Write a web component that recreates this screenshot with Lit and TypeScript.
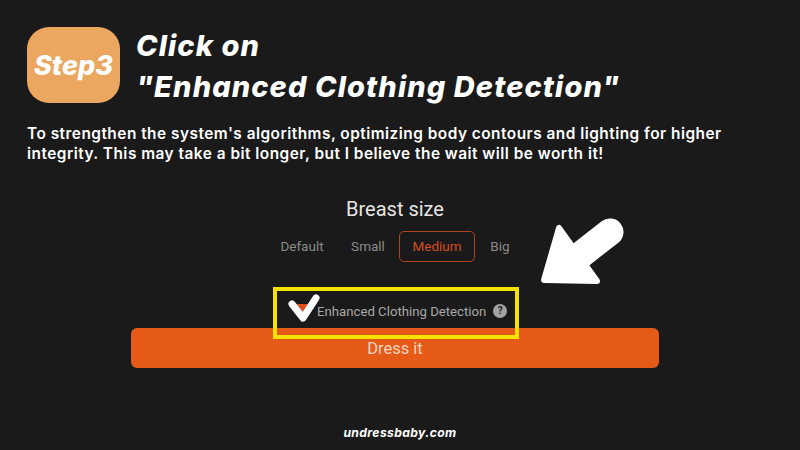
import { LitElement, html, css } from "lit";
import { customElement } from "lit/decorators.js";

@customElement("app-root")
export class AppRoot extends LitElement {
  static styles = css`
    :host { display: block; width: 800px; height: 450px; background: #1a1a1a; overflow: hidden; }
    .page { position: relative; width: 800px; height: 450px; box-sizing: border-box; padding: 27px 27px 0; display: flex; flex-direction: column; color: #fff; font-family: "Inter", sans-serif; }
    .head { display: flex; gap: 16px; height: 76px; }
    .badge { width: 93px; height: 76px; flex: none; box-sizing: border-box; background: #eba75f; border-radius: 22px; display: flex; align-items: center; justify-content: center; font: italic 800 27px "Inter", sans-serif; letter-spacing: 0; }
    .titles { display: flex; flex-direction: column; font: italic 800 29px/41px "Inter", sans-serif; letter-spacing: 1.1px; margin-top: -2px; white-space: nowrap; }
    .para { margin: 21px 0 0; width: 705px; font: 600 15.4px/20px "Inter", sans-serif; letter-spacing: 0.49px; }
    .panel { margin: 32px 0 0 104px; width: 528px; display: flex; flex-direction: column; align-items: center; font-family: "Roboto", sans-serif; }
    .ptitle { font-size: 20px; line-height: 26px; color: #e6e6e6; margin-left: 0; }
    .opts { display: flex; align-items: center; margin-top: 9px; margin-left: 3px; font-size: 13.5px; color: #8a8a8a; height: 31px; }
    .opt { box-sizing: border-box; height: 31px; display: flex; align-items: center; justify-content: center; padding-bottom: 1px; }
    .default { width: 60px; margin-right: 13px; padding-left: 2px; }
    .small { width: 48px; margin-right: 7px; }
    .medium { width: 76px; border: 1px solid #b0441e; border-radius: 5px; color: #d64c1e; margin-right: 3px; }
    .big { width: 44px; }
    .check { display: flex; align-items: center; margin-top: 39px; margin-left: 52px; height: 20px; font-size: 13.2px; color: #a8a8a8; gap: 7px; width: 208px; box-sizing: border-box; }
    .q { width: 14px; height: 14px; border-radius: 50%; background: #a3a3a3; color: #1a1a1a; font: 700 10px/14px "Roboto", sans-serif; text-align: center; flex: none; }
    .btn { margin-top: 7px; width: 528px; height: 40px; background: #e55a17; border-radius: 6px; color: #f6d5c2; font-size: 16.5px; line-height: 41px; text-align: center; }
    .foot { position: absolute; left: 0; right: 0; top: 424px; text-align: center; font: italic 700 12.2px/18px "Inter", sans-serif; letter-spacing: 0.35px; }
    .box { position: absolute; left: 273px; top: 287px; width: 246px; height: 52px; box-sizing: border-box; border: 4px solid #f7e100; }
    .art { position: absolute; left: 0; top: 0; }
  `;

  render() {
    return html`<div class="page">
      <div class="head">
        <div class="badge">Step3</div>
        <div class="titles"><span>Click on</span><span>"Enhanced Clothing Detection"</span></div>
      </div>
      <p class="para">To strengthen the system's algorithms, optimizing body contours and lighting for higher integrity. This may take a bit longer, but I believe the wait will be worth it!</p>
      <div class="panel">
        <div class="ptitle">Breast size</div>
        <div class="opts">
          <div class="opt default">Default</div>
          <div class="opt small">Small</div>
          <div class="opt medium">Medium</div>
          <div class="opt big">Big</div>
        </div>
        <div class="check"><span>Enhanced Clothing Detection</span><span class="q">?</span></div>
        <div class="btn">Dress it</div>
      </div>
      <div class="foot">undressbaby.com</div>
      <div class="box"></div>
      <svg class="art" width="800" height="450" viewBox="0 0 800 450">
        <path d="M296 304 L312 304 L304 314 Z" fill="#dd4d1c"/>
        <path d="M292 304 L303 318 L316 298" fill="none" stroke="#fff" stroke-width="7" stroke-linecap="round" stroke-linejoin="round"/>
        <path d="M559 228 L544 280 L597 281 Z" fill="#fff" stroke="#fff" stroke-width="6" stroke-linejoin="round"/>
        <path d="M578 257 L610 232" fill="none" stroke="#fff" stroke-width="27" stroke-linecap="round"/>
      </svg>
    </div>`;
  }
}
